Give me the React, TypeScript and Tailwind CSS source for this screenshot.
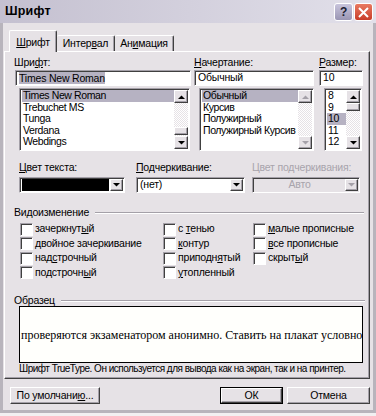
import type { ReactNode } from "react";

const raised =
  "border border-t-white border-l-white border-r-[#404040] border-b-[#404040] shadow-[inset_-1px_-1px_0_#a4a0a8]";
const sunken =
  "border border-t-[#a4a0a8] border-l-[#a4a0a8] border-r-white border-b-white shadow-[inset_1px_1px_0_#404040]";
const checker =
  "bg-[image:repeating-conic-gradient(#e6e2e6_0_25%,#ffffff_0_50%)] bg-size-[2px_2px]";

function U({ children }: { children: ReactNode }) {
  return <span className="underline underline-offset-1">{children}</span>;
}

function Arrow({ dir, disabled }: { dir: "up" | "down"; disabled?: boolean }) {
  const pts = dir === "up" ? "0,4 3.5,0.5 7,4" : "0,0 3.5,3.5 7,0";
  return (
    <div className={`flex h-[13px] w-full shrink-0 items-center justify-center bg-[#e6e2e6] ${raised}`}>
      <svg width="7" height="4" viewBox="0 0 7 4">
        <polygon points={pts} fill={disabled ? "#a4a0a8" : "#000"} />
      </svg>
    </div>
  );
}

function ScrollBar({ thumb, disabled }: { thumb?: number; disabled?: boolean }) {
  return (
    <div className="flex w-[14px] shrink-0 flex-col">
      <Arrow dir="up" disabled={disabled} />
      <div className={`relative flex-1 ${checker}`}>
        {thumb !== undefined && (
          <div className={`absolute left-0 right-0 h-[8px] bg-[#e6e2e6] ${raised}`} style={{ top: thumb }} />
        )}
      </div>
      <Arrow dir="down" disabled={disabled} />
    </div>
  );
}

function ListBox({
  items,
  selected,
  thumb,
  disabled,
  className,
}: {
  items: string[];
  selected: number;
  thumb?: number;
  disabled?: boolean;
  className: string;
}) {
  return (
    <div className={`flex h-[63px] bg-white p-px ${sunken} ${className}`}>
      <div className="min-w-0 flex-1 overflow-hidden pl-px tracking-[-0.4px]">
        {items.map((it, i) => (
          <div
            key={it}
            className={`whitespace-nowrap pl-px leading-[11.5px] ${i === selected ? "bg-[#b6b2c2]" : ""}`}
          >
            {it}
          </div>
        ))}
      </div>
      <ScrollBar thumb={thumb} disabled={disabled} />
    </div>
  );
}

function Combo({ children, disabled, className }: { children: ReactNode; disabled?: boolean; className: string }) {
  return (
    <div className={`flex h-[16px] p-px ${disabled ? "bg-[#e6e2e6]" : "bg-white"} ${sunken} ${className}`}>
      <div className="flex min-w-0 flex-1 items-center">{children}</div>
      <div className={`flex w-[13px] items-center justify-center bg-[#e6e2e6] ${raised}`}>
        <svg width="7" height="4" viewBox="0 0 7 4">
          <polygon points="0,0 3.5,3.5 7,0" fill={disabled ? "#a4a0a8" : "#000"} />
        </svg>
      </div>
    </div>
  );
}

function Check({ label }: { label: ReactNode }) {
  return (
    <div className="flex h-[14.5px] items-center gap-[2px] whitespace-nowrap">
      <div className={`h-[13px] w-[13px] shrink-0 bg-white ${sunken}`} />
      <span>{label}</span>
    </div>
  );
}

function GroupLabel({ children, className }: { children: ReactNode; className: string }) {
  return (
    <div className={`flex items-center gap-[6px] ${className}`}>
      <span className="whitespace-nowrap">{children}</span>
      <div className="h-[2px] flex-1 border-t border-t-[#a4a0a8] border-b border-b-white" />
    </div>
  );
}

function Button({ children, width, primary }: { children: ReactNode; width: string; primary?: boolean }) {
  return (
    <div className={`${width} h-[17px] ${primary ? "border border-black" : ""}`}>
      <div className={`flex h-full items-center justify-center bg-[#e6e2e6] ${raised}`}>{children}</div>
    </div>
  );
}

export default function App() {
  return (
    <div className="h-[416px] w-[376px] overflow-hidden bg-[#f2f0f2] font-['Liberation_Sans',Arial,sans-serif] text-[10.5px] tracking-[-0.2px] text-black">
      <div className="flex h-[413px] flex-col border-x-[3px] border-b-[3px] border-x-[#b8b4bc] border-b-[#b8b4bc] bg-[#e6e2e6]">
        {/* Title bar */}
        <div className="-mx-[3px] flex h-[23px] shrink-0 items-center bg-gradient-to-r from-[#c4c0d0] to-[#e2e0ea] pl-[5px] pr-[3px]">
          <span className="text-[12.5px] font-bold tracking-[0.2px]">Шрифт</span>
          <div className="ml-auto flex items-center gap-[1px] pt-px">
            <div className="flex h-[18px] w-[19px] items-center justify-center rounded-[3px] border border-white bg-gradient-to-b from-[#c8c4dc] to-[#9a96b4] text-[12px] font-bold text-[#202030]">
              ?
            </div>
            <div className="flex h-[18px] w-[19px] items-center justify-center rounded-[3px] border border-white bg-gradient-to-b from-[#e87860] to-[#c83c28]">
              <svg width="11" height="11" viewBox="0 0 11 11">
                <path d="M1 1 L10 10 M10 1 L1 10" stroke="#fff" strokeWidth="2" />
              </svg>
            </div>
          </div>
        </div>

        {/* Body */}
        <div className="flex flex-1 flex-col pl-px pr-[3px] pt-[7px]">
          {/* Tabs */}
          <div className="relative z-10 flex items-end pl-[5px]">
            <div className="-mb-px flex h-[22px] w-[48px] items-start justify-center rounded-t-[2px] border-l border-r border-t border-l-white border-r-[#404040] border-t-white bg-[#e6e2e6] pt-[4px] shadow-[inset_-1px_0_0_#a4a0a8]">
              <span><U>Ш</U>рифт</span>
            </div>
            <div className="flex h-[16px] w-[58px] items-center justify-center rounded-t-[2px] border-r border-t border-r-[#404040] border-t-white shadow-[inset_-1px_0_0_#a4a0a8]">
              <span>Интер<U>в</U>ал</span>
            </div>
            <div className="flex h-[16px] w-[59px] items-center justify-center rounded-t-[2px] border-r border-t border-r-[#404040] border-t-white shadow-[inset_-1px_0_0_#a4a0a8]">
              <span>Ан<U>и</U>мация</span>
            </div>
          </div>

          {/* Panel */}
          <div className={`flex h-[328px] flex-col pl-[10px] pr-[4px] pt-[4px] ${raised}`}>
            {/* Font / style / size */}
            <div className="flex">
              <div className="flex w-[176px] flex-col">
                <div className="-ml-px h-[13px] leading-[13px]">Шри<U>ф</U>т:</div>
                <div className={`mt-px flex h-[16px] items-center bg-white pl-[3px] ${sunken}`}>
                  <span className="bg-[#b6b2c2] leading-[12px]">Times New Roman</span>
                </div>
                <ListBox
                  className="ml-[4px] mr-px mt-[2px]"
                  items={["Times New Roman", "Trebuchet MS", "Tunga", "Verdana", "Webdings"]}
                  selected={0}
                  thumb={24}
                />
              </div>
              <div className="ml-[3px] flex w-[120px] flex-col">
                <div className="h-[13px] leading-[13px]"><U>Н</U>ачертание:</div>
                <div className={`mt-px flex h-[16px] items-center bg-white pl-[3px] ${sunken}`}>Обычный</div>
                <ListBox
                  className="ml-[5px] mt-[2px]"
                  items={["Обычный", "Курсив", "Полужирный", "Полужирный Курсив"]}
                  selected={0}
                  disabled
                />
              </div>
              <div className="ml-[5px] flex w-[44px] flex-col">
                <div className="h-[13px] leading-[13px]"><U>Р</U>азмер:</div>
                <div className={`mt-px flex h-[16px] items-center bg-white pl-[3px] ${sunken}`}>10</div>
                <ListBox
                  className="ml-[5px] mr-px mt-[2px]"
                  items={["8", "9", "10", "11", "12"]}
                  selected={2}
                  thumb={0}
                />
              </div>
            </div>

            {/* Colours / underline */}
            <div className="mt-[10px] flex pl-[4px]">
              <div className="flex w-[106px] flex-col">
                <div className="h-[13px] leading-[13px]"><U>Ц</U>вет текста:</div>
                <Combo className="mt-[3px] w-full">
                  <div className="mx-px h-[12px] flex-1 bg-black" />
                </Combo>
              </div>
              <div className="ml-[11px] flex w-[109px] flex-col">
                <div className="h-[13px] leading-[13px]"><U>П</U>одчеркивание:</div>
                <Combo className="mt-[3px] w-full">
                  <span className="pl-[2px]">(нет)</span>
                </Combo>
              </div>
              <div className="ml-[7px] flex w-[108px] flex-col">
                <div className="h-[13px] whitespace-nowrap leading-[13px] text-[#a8a4ac]">Цвет подчеркивания:</div>
                <Combo className="mt-[3px] w-full" disabled>
                  <span className="w-full text-center text-[#a8a4ac]">Авто</span>
                </Combo>
              </div>
            </div>

            {/* Effects */}
            <GroupLabel className="-ml-px mr-[1px] mt-[13px] h-[13px]">Видоизменение</GroupLabel>
            <div className="mt-[3px] flex pl-[5px]">
              <div className="flex w-[143px] flex-col">
                <Check label={<>зачеркнут<U>ы</U>й</>} />
                <Check label={<><U>д</U>войное зачеркивание</>} />
                <Check label={<>над<U>с</U>трочный</>} />
                <Check label={<>подстрочн<U>ы</U>й</>} />
              </div>
              <div className="flex w-[90px] flex-col">
                <Check label={<>с <U>т</U>енью</>} />
                <Check label={<><U>к</U>онтур</>} />
                <Check label={<>приподн<U>я</U>тый</>} />
                <Check label={<><U>у</U>топленный</>} />
              </div>
              <div className="flex flex-col">
                <Check label={<><U>м</U>алые прописные</>} />
                <Check label={<><U>в</U>се прописные</>} />
                <Check label={<>скрыт<U>ы</U>й</>} />
              </div>
            </div>

            {/* Sample */}
            <GroupLabel className="-ml-px mt-[15px] h-[11px] leading-[11px]">Образец</GroupLabel>
            <div className="ml-[4px] mr-[2px] flex h-[57px] items-center overflow-hidden border border-black bg-[#fffffc]">
              <span className="whitespace-nowrap pl-px font-['Liberation_Serif',serif] text-[12px] tracking-normal">
                проверяются экзаменатором анонимно. Ставить на плакат условно
              </span>
            </div>
            <div className="ml-[4px] h-[11px] whitespace-nowrap text-[10px] leading-[11px] tracking-[-0.5px]">
              Шрифт TrueType. Он используется для вывода как на экран, так и на принтер.
            </div>
          </div>

          {/* Buttons */}
          <div className="mt-[8px] flex items-center pl-[6px]">
            <Button width="w-[90px]">
              <span>По умолчани<U>ю</U>...</span>
            </Button>
            <div className="ml-auto flex gap-[4px]">
              <Button width="w-[63px]" primary>ОК</Button>
              <Button width="w-[83px]">Отмена</Button>
            </div>
          </div>
        </div>
      </div>
    </div>
  );
}
